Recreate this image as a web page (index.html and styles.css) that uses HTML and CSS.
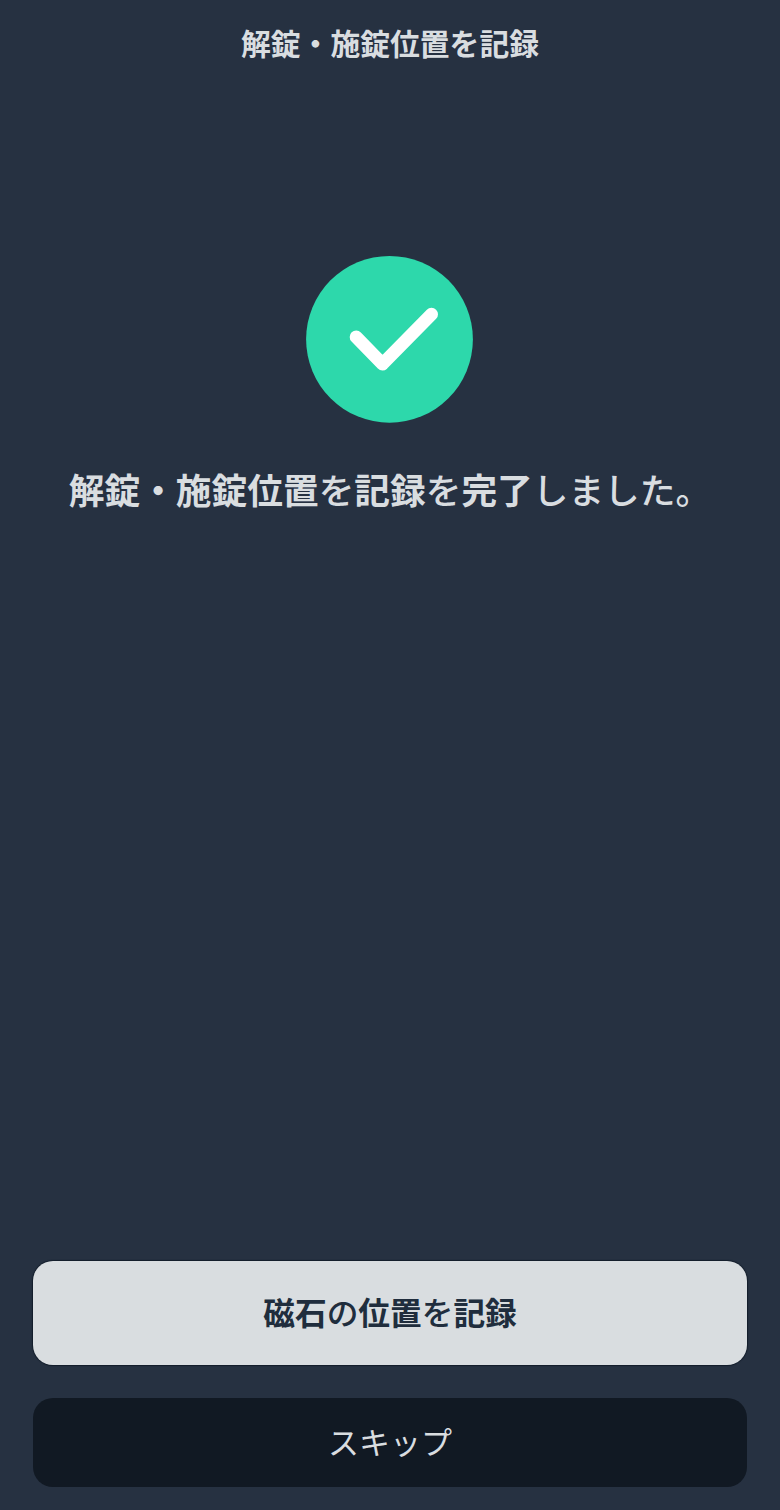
FILE: index.html
```html
<!DOCTYPE html>
<html lang="ja">
<head>
  <meta charset="UTF-8">
  <meta name="viewport" content="width=device-width, initial-scale=1">
  <title>解錠・施錠位置を記録</title>
  <link rel="stylesheet" href="styles.css">
</head>
<body>

  <div class="container">
    <h1>解錠・施錠位置を記録</h1>

    <div class="result">
      <svg class="check" viewBox="0 0 168 168" aria-hidden="true">
        <circle cx="83.5" cy="84.3" r="83.4" fill="#2dd8ab"/>
        <path d="M50.2 82 L76.5 109 L125.5 59.3" fill="none" stroke="#fff" stroke-width="13" stroke-linecap="round" stroke-linejoin="round"/>
      </svg>
      <p class="message">解錠・施錠位置<span class="kana">を</span>記録<span class="kana">を</span>完了<span class="kana">しました。</span></p>
    </div>

    <div class="actions">
      <button class="btn btn-primary">磁石<span class="kana">の</span>位置<span class="kana">を</span>記録</button>
      <button class="btn btn-skip">スキップ</button>
    </div>
  </div>

</body>
</html>
```

FILE: styles.css
```css
* {
  box-sizing: border-box;
}

body {
  margin: 0;
  font-family: "Noto Sans CJK JP", sans-serif;
  background-color: #263141;
  color: #d9dde0;
}

.container {
  display: flex;
  flex-direction: column;
  height: 1510px;
  padding: 20px 33px 23px;
  text-align: center;
}

h1 {
  margin: 0;
  font-size: 29.8px;
  font-weight: 700;
  line-height: 44px;
}

.result {
  flex: 1;
  padding-top: 191px;
}

.check {
  display: block;
  width: 168px;
  height: 168px;
  margin: 0 auto;
}

.message {
  margin: 40px 0 0;
  font-size: 35.7px;
  font-weight: 700;
  line-height: 52px;
  white-space: nowrap;
}

.kana {
  font-weight: 500;
}

.actions {
  display: flex;
  flex-direction: column;
  gap: 33px;
}

.btn {
  border: none;
  border-radius: 20px;
  padding: 0 0 5px;
  font-family: inherit;
  font-size: 31.7px;
  cursor: pointer;
}

.btn-primary {
  height: 104px;
  background: #d9dde0;
  color: #202d3d;
  font-weight: 700;
  box-shadow: 0 0 1px 1px #131d2b;
}

.btn-skip {
  height: 89px;
  background: #111923;
  color: #d9dde0;
  font-size: 31px;
  font-weight: 400;
}
```
